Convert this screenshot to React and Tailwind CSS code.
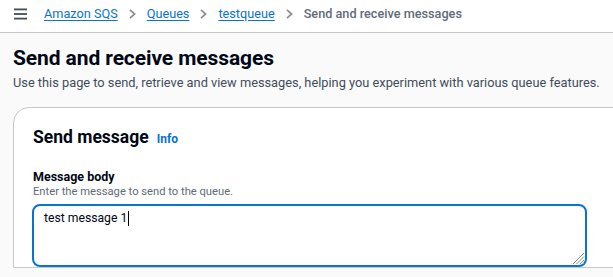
import React from "react";

const font = { fontFamily: "Roboto, 'Noto Sans', sans-serif" };

function Chevron() {
  return (
    <svg width="7" height="10" viewBox="0 0 7 10" className="mx-[11px] mt-[3px] shrink-0">
      <path d="M1 0.8 L5.6 5 L1 9.2" fill="none" stroke="#8c8c94" strokeWidth="1.7" />
    </svg>
  );
}

export default function App() {
  return (
    <div className="w-[613px] h-[277px] overflow-hidden bg-[#fafafa] text-[#000716]" style={font}>
      <div className="h-[33px] bg-white border-b border-[#c6c6cd] flex items-start pl-[14px] pt-[6px]">
        <svg width="13" height="12" viewBox="0 0 13 12" className="shrink-0 mt-[2px]">
          <rect x="0" y="0.5" width="13" height="1.8" fill="#414d5c" />
          <rect x="0" y="5.1" width="13" height="1.8" fill="#414d5c" />
          <rect x="0" y="9.7" width="13" height="1.8" fill="#414d5c" />
        </svg>
        <div className="flex items-start ml-[17px] text-[12.7px] leading-[16px]">
          <a className="text-[#0972d3] underline underline-offset-[2px]">Amazon SQS</a>
          <Chevron />
          <a className="text-[#0972d3] underline underline-offset-[2px]">Queues</a>
          <Chevron />
          <a className="text-[#0972d3] underline underline-offset-[2px]">testqueue</a>
          <Chevron />
          <span className="text-[#5f6b7a] font-medium">Send and receive messages</span>
        </div>
      </div>
      <div className="pl-[13px] pt-[11px]">
        <h1 className="text-[21px] font-bold leading-[28px] tracking-[-0.1px] text-[#000716]">Send and receive messages</h1>
        <p className="text-[12.8px] leading-[18px] text-[#414d5c] mt-[2px] whitespace-nowrap">
          Use this page to send, retrieve and view messages, helping you experiment with various queue features.
        </p>
      </div>
      <div className="ml-[13px] mt-[15px] w-[640px] bg-white border border-[#c6c6cd] rounded-tl-[16px] pl-[19px] pt-[17px]">
        <div className="flex items-baseline">
          <h2 className="text-[17.5px] font-bold leading-[24px]">Send message</h2>
          <a className="ml-[8px] text-[12px] font-bold text-[#0972d3]">Info</a>
        </div>
        <div className="mt-[20px]">
          <div className="text-[12.5px] font-bold leading-[16px]">Message body</div>
          <div className="text-[11.2px] leading-[14px] text-[#5f6b7a]">Enter the message to send to the queue.</div>
        </div>
        <div className="relative mt-[5px] ml-[-1px] w-[555px] h-[63px] rounded-[8px] border-2 border-[#0972d3] bg-white pl-[10px] pt-[3px] flex items-start">
          <span className="text-[12.2px] leading-[18px] text-[#000716]">test message 1</span>
          <span className="w-[1px] h-[15px] bg-black mt-[2px] ml-[1px]" />
          <svg width="13" height="13" viewBox="0 0 13 13" className="absolute right-[0px] bottom-[0px]">
            <path d="M12 1 L1 12 M12 4.5 L4.5 12 M12 8 L8 12 M12 11 L11 12" stroke="#8c8c94" strokeWidth="1" />
          </svg>
        </div>
      </div>
    </div>
  );
}
